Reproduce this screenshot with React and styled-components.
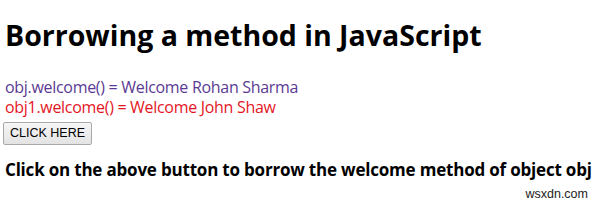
import React from "react";
import styled, { createGlobalStyle } from "styled-components";

const GlobalStyle = createGlobalStyle`
  html, body {
    margin: 0;
    padding: 0;
    background: #ffffff;
  }
  body {
    font-family: "Open Sans", "Noto Sans", sans-serif;
    width: 600px;
    height: 206px;
    overflow: hidden;
  }
`;

const Page = styled.div`
  position: relative;
  height: 206px;
  padding: 16px 5px 0;
  box-sizing: border-box;
`;

const Title = styled.h1`
  margin: 0 0 23px;
  font-size: 28.5px;
  font-weight: 700;
  line-height: 38px;
  color: #000;
`;

const Result = styled.div`
  font-size: 16px;
  letter-spacing: -0.3px;
  line-height: 20px;
  color: ${(p) => p.color};
`;

const Button = styled.button`
  display: block;
  margin: 5px 0 0 -2px;
  padding: 3px 6px;
  font-family: "Liberation Sans", Arial, sans-serif;
  font-size: 12.5px;
  line-height: 15px;
  color: #000;
  background: linear-gradient(#f6f6f6, #e3e3e3);
  border: 1px solid #a9a9a9;
  border-radius: 2px;
`;

const Note = styled.h3`
  margin: 14px 0 0;
  font-size: 17px;
  font-weight: 700;
  letter-spacing: -0.2px;
  line-height: 22px;
  white-space: nowrap;
  color: #000;
`;

const Watermark = styled.span`
  position: absolute;
  right: 12px;
  bottom: 5px;
  font-family: "Liberation Sans", Arial, sans-serif;
  font-size: 12.5px;
  color: #222;
`;

export default function App() {
  return (
    <>
      <GlobalStyle />
      <Page>
        <Title>Borrowing a method in JavaScript</Title>
        <Result color="#5b3a94">obj.welcome() = Welcome Rohan Sharma</Result>
        <Result color="#e3161f">obj1.welcome() = Welcome John Shaw</Result>
        <Button>CLICK HERE</Button>
        <Note>Click on the above button to borrow the welcome method of object obj</Note>
        <Watermark>wsxdn.com</Watermark>
      </Page>
    </>
  );
}
